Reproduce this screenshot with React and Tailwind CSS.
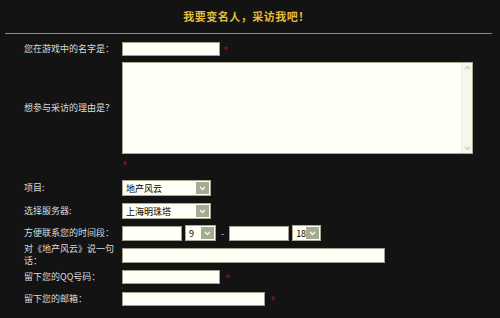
import React from "react";

const FONT = { fontFamily: '"Noto Sans CJK SC", "Noto Sans", sans-serif' };

function Star({ className = "" }) {
  return (
    <span className={"text-[#7d1414] text-[11px] leading-none font-bold " + className}>*</span>
  );
}

function Input({ className = "" }) {
  return <div className={"h-[14px] border border-[#9f9f8c] bg-[#fffff6] " + className} />;
}

function Sel({ className = "", text }) {
  return (
    <div className={"flex items-center h-[16px] border border-[#a9a996] bg-[#fffff6] " + className}>
      <span className="flex-1 pl-[3px] text-[9px] leading-none text-black">{text}</span>
      <span className="mr-[1px] w-[13px] h-[12px] bg-[#a3ad92] flex items-center justify-center">
        <svg width="7" height="5" viewBox="0 0 7 5">
          <path d="M1 1 L3.5 3.6 L6 1" stroke="#f4f7ee" strokeWidth="1.4" fill="none" />
        </svg>
      </span>
    </div>
  );
}

function Label({ children }) {
  return (
    <div className="w-[98px] shrink-0 pl-[24px] box-content text-[9px] leading-[12px] text-[#dcdcdc]">
      {children}
    </div>
  );
}

export default function App() {
  return (
    <div className="w-[500px] h-[318px] bg-[#131313] overflow-hidden" style={FONT}>
      <div className="h-[33px] flex items-center justify-center">
        <span className="text-[11px] font-bold text-[#e3bc3c] tracking-[0.5px] mr-[7px]">我要变名人，采访我吧！</span>
      </div>
      <div className="ml-[5px] mr-[8px] h-px bg-[#8a8a8a]" />

      <div className="flex flex-col">
        <div className="flex items-center mt-[8px]">
          <Label>您在游戏中的名字是：</Label>
          <Input className="w-[98px]" />
          <Star className="ml-[3px] mt-[3px]" />
        </div>

        <div className="flex items-center mt-[6px]">
          <Label>想参与采访的理由是？</Label>
          <div className="w-[351px] h-[92px] flex border border-[#a9a996] bg-[#fffff6]">
            <div className="flex-1" />
            <div className="w-[11px] flex flex-col justify-between items-center bg-[#f6f6ec] border-l border-[#ececdf] py-[2px]">
              <svg width="7" height="5" viewBox="0 0 7 5">
                <path d="M1 4 L3.5 1.5 L6 4" stroke="#c8c8bc" strokeWidth="1.2" fill="none" />
              </svg>
              <svg width="7" height="5" viewBox="0 0 7 5">
                <path d="M1 1 L3.5 3.5 L6 1" stroke="#c8c8bc" strokeWidth="1.2" fill="none" />
              </svg>
            </div>
          </div>
        </div>

        <div className="h-[10px] mt-[4px] pl-[122px] flex items-center">
          <Star className="mt-[4px]" />
        </div>

        <div className="flex items-center mt-[12px]">
          <Label>项目:</Label>
          <Sel className="w-[89px]" text="地产风云" />
        </div>

        <div className="flex items-center mt-[7px]">
          <Label>选择服务器:</Label>
          <Sel className="w-[89px]" text="上海明珠塔" />
        </div>

        <div className="flex items-center mt-[6px]">
          <Label>方便联系您的时间段：</Label>
          <Input className="w-[60px] h-[15px]" />
          <Sel className="w-[31px] ml-[3px]" text="9" />
          <span className="ml-[5px] mr-[5px] text-[9px] text-[#d6d6d6] leading-none">-</span>
          <Input className="w-[60px] h-[15px]" />
          <Sel className="w-[29px] ml-[3px]" text="18" />
        </div>

        <div className="flex items-center mt-[2px]">
          <Label>对《地产风云》说一句话：</Label>
          <Input className="w-[263px] h-[15px]" />
        </div>

        <div className="flex items-center mt-[3px]">
          <Label>留下您的QQ号码：</Label>
          <Input className="w-[98px]" />
          <Star className="ml-[5px] mt-[3px]" />
        </div>

        <div className="flex items-center mt-[8px]">
          <Label>留下您的邮箱：</Label>
          <Input className="w-[143px]" />
          <Star className="ml-[5px] mt-[3px]" />
        </div>
      </div>
    </div>
  );
}
